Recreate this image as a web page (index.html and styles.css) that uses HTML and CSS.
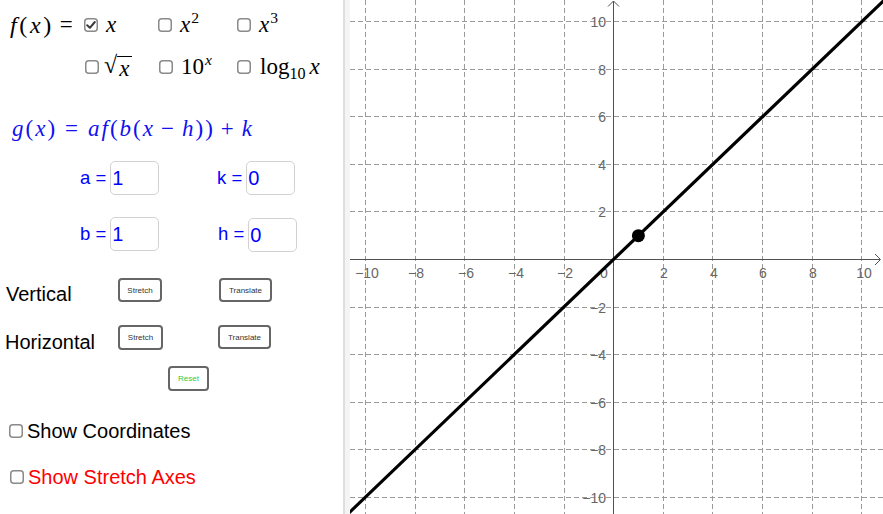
FILE: index.html
```html
<!DOCTYPE html>
<html>
<head>
<meta charset="utf-8">
<link rel="stylesheet" href="styles.css">
</head>
<body>
<div class="app">
  <div class="panel">
    <div class="frow r1">
      <div class="flab m"><span class="fx"><i>f</i>(<i>x</i>)</span><span class="eq">=</span></div>
      <div class="opt c1">
        <svg class="cb" viewBox="0 0 14 14"><rect x="0.75" y="0.75" width="12.5" height="12.5" rx="3"/><path class="tick" d="M3.2 7.2 L5.9 9.8 L10.8 4"/></svg>
        <span class="m"><i>x</i></span>
      </div>
      <div class="opt c2">
        <svg class="cb" viewBox="0 0 14 14"><rect x="0.75" y="0.75" width="12.5" height="12.5" rx="3"/></svg>
        <span class="m"><i>x</i><sup>2</sup></span>
      </div>
      <div class="opt">
        <svg class="cb" viewBox="0 0 14 14"><rect x="0.75" y="0.75" width="12.5" height="12.5" rx="3"/></svg>
        <span class="m"><i>x</i><sup>3</sup></span>
      </div>
    </div>
    <div class="frow r2">
      <div class="opt c1 g5">
        <svg class="cb" viewBox="0 0 14 14"><rect x="0.75" y="0.75" width="12.5" height="12.5" rx="3"/></svg>
        <span class="m sqrt"><span class="rad">√</span><span class="radx"><i>x</i></span></span>
      </div>
      <div class="opt c2">
        <svg class="cb" viewBox="0 0 14 14"><rect x="0.75" y="0.75" width="12.5" height="12.5" rx="3"/></svg>
        <span class="m">10<sup><i>x</i></sup></span>
      </div>
      <div class="opt g9">
        <svg class="cb" viewBox="0 0 14 14"><rect x="0.75" y="0.75" width="12.5" height="12.5" rx="3"/></svg>
        <span class="m">log<sub>10</sub><span class="sp"></span><i>x</i></span>
      </div>
    </div>
    <div class="grow m"><i>g</i>(<i>x</i>)<span class="rel">=</span><i>a</i><i>f</i>(<i>b</i>(<i>x</i><span class="bin">−</span><i>h</i>))<span class="bin">+</span><i>k</i></div>
    <div class="irow ra">
      <div class="icell w137"><span class="ilab">a =</span><div class="ibox">1</div></div>
      <div class="icell"><span class="ilab">k =</span><div class="ibox">0</div></div>
    </div>
    <div class="irow rb">
      <div class="icell w138"><span class="ilab">b =</span><div class="ibox">1</div></div>
      <div class="icell"><span class="ilab">h =</span><div class="ibox low">0</div></div>
    </div>
    <div class="brow bv">
      <div class="blab">Vertical</div>
      <div class="btn b44">Stretch</div>
      <div class="btn b53">Translate</div>
    </div>
    <div class="brow bh">
      <div class="blab">Horizontal</div>
      <div class="btn b45">Stretch</div>
      <div class="btn b53 t0">Translate</div>
    </div>
    <div class="rrow"><div class="btn reset">Reset</div></div>
    <div class="crow c-first">
      <svg class="cb2" viewBox="0 0 14 14"><rect x="0.75" y="0.75" width="12.5" height="12.5" rx="3"/></svg>
      <span class="ctext">Show Coordinates</span>
    </div>
    <div class="crow c-second">
      <svg class="cb2" viewBox="0 0 14 14"><rect x="0.75" y="0.75" width="12.5" height="12.5" rx="3"/></svg>
      <span class="ctext red">Show Stretch Axes</span>
    </div>
  </div>
  <div class="divider"></div>
  <div class="graph">
    <svg width="533" height="514" viewBox="0 0 533 514">
      <g class="grid">
        <line x1="15.5" y1="0" x2="15.5" y2="514"/>
        <line x1="65.5" y1="0" x2="65.5" y2="514"/>
        <line x1="114.5" y1="0" x2="114.5" y2="514"/>
        <line x1="164.5" y1="0" x2="164.5" y2="514"/>
        <line x1="214.5" y1="0" x2="214.5" y2="514"/>
        <line x1="313.5" y1="0" x2="313.5" y2="514"/>
        <line x1="362.5" y1="0" x2="362.5" y2="514"/>
        <line x1="412.5" y1="0" x2="412.5" y2="514"/>
        <line x1="462.5" y1="0" x2="462.5" y2="514"/>
        <line x1="511.5" y1="0" x2="511.5" y2="514"/>
        <line x1="0" y1="21.5" x2="533" y2="21.5"/>
        <line x1="0" y1="69.5" x2="533" y2="69.5"/>
        <line x1="0" y1="116.5" x2="533" y2="116.5"/>
        <line x1="0" y1="164.5" x2="533" y2="164.5"/>
        <line x1="0" y1="211.5" x2="533" y2="211.5"/>
        <line x1="0" y1="307.5" x2="533" y2="307.5"/>
        <line x1="0" y1="354.5" x2="533" y2="354.5"/>
        <line x1="0" y1="402.5" x2="533" y2="402.5"/>
        <line x1="0" y1="449.5" x2="533" y2="449.5"/>
        <line x1="0" y1="497.5" x2="533" y2="497.5"/>
      </g>
      <g class="axes">
        <line x1="0" y1="259.5" x2="530" y2="259.5"/>
        <polyline points="525,254 530.5,259.5 525,265"/>
        <line x1="263.5" y1="514" x2="263.5" y2="1"/>
        <polyline points="258,6.5 263.5,1 269,6.5"/>
      </g>
      <g class="lbl xl">
        <text x="17" y="278">−10</text>
        <text x="66" y="278">−8</text>
        <text x="116" y="278">−6</text>
        <text x="166" y="278">−4</text>
        <text x="215" y="278">−2</text>
        <text x="254" y="278">0</text>
        <text x="314" y="278">2</text>
        <text x="364" y="278">4</text>
        <text x="413" y="278">6</text>
        <text x="463" y="278">8</text>
        <text x="514" y="278">10</text>
      </g>
      <g class="lbl yl">
        <text x="256" y="26.5">10</text>
        <text x="256" y="74.5">8</text>
        <text x="256" y="121.5">6</text>
        <text x="256" y="169.5">4</text>
        <text x="256" y="216.5">2</text>
        <text x="256" y="312.5">−2</text>
        <text x="256" y="359.5">−4</text>
        <text x="256" y="407.5">−6</text>
        <text x="256" y="454.5">−8</text>
        <text x="256" y="502.5">−10</text>
      </g>
      <line class="fline" x1="-9.85" y1="521.3" x2="541.8" y2="-7.1"/>
      <circle class="pt" cx="288.4" cy="235.7" r="6.5"/>
    </svg>
  </div>
</div>
</body>
</html>
```

FILE: styles.css
```css
html, body {
  margin: 0;
  padding: 0;
  background: #ffffff;
}
body {
  width: 883px;
  height: 514px;
  overflow: hidden;
  font-family: "Liberation Sans", Arial, sans-serif;
  color: #000;
}
.app {
  display: flex;
  width: 883px;
  height: 514px;
}
.panel {
  width: 343px;
  flex: none;
  display: flex;
  flex-direction: column;
}
.divider {
  width: 7px;
  flex: none;
  background: #f4f4f4;
  border-left: 2px solid #dedede;
  box-sizing: border-box;
}
.graph {
  flex: 1;
}
.graph svg {
  display: block;
}

/* math */
.m {
  font-family: "Liberation Serif", "Times New Roman", serif;
  font-size: 23px;
  line-height: 1;
  white-space: nowrap;
}
.m i {
  font-style: italic;
}
.m sup {
  font-size: 0.68em;
  vertical-align: 0.55em;
  line-height: 0;
  margin-left: 1px;
}
.m sub {
  font-size: 0.7em;
  vertical-align: -0.3em;
  line-height: 0;
}
.sp {
  display: inline-block;
  width: 4px;
}

.frow {
  display: flex;
  align-items: center;
}
.r1 {
  height: 49px;
  padding-left: 10px;
}
.r2 {
  height: 35px;
  padding-left: 85px;
}
.flab {
  width: 74px;
  display: flex;
  align-items: center;
  font-size: 24px;
}
.fx {
  letter-spacing: 2.6px;
}
.eq {
  margin-left: 6px;
  font-size: 23px;
}
.opt {
  display: flex;
  align-items: center;
  gap: 8px;
}
.opt.g5 {
  gap: 5px;
}
.opt.g9 {
  gap: 9px;
}
.c1 {
  width: 74px;
}
.r2 .c2 {
  width: 78px;
}
.r1 .c2 {
  width: 79px;
}
.cb {
  width: 14px;
  height: 14px;
  flex: none;
}
.cb rect, .cb2 rect {
  fill: #fff;
  stroke: #8a8a8a;
  stroke-width: 1.5;
}
.cb .tick {
  fill: none;
  stroke: #3a3a3a;
  stroke-width: 2;
  stroke-linecap: round;
  stroke-linejoin: round;
}
.sqrt {
  display: inline-flex;
  align-items: flex-start;
}
.rad {
  font-size: 24px;
  line-height: 1;
}
.radx {
  border-top: 1px solid #000;
  margin-top: 3px;
  padding: 0 3px 0 2px;
  line-height: 1;
}

/* g(x) */
.grow {
  margin-top: 24px;
  height: 40px;
  padding-left: 12px;
  display: flex;
  align-items: center;
  color: #1010f0;
  letter-spacing: 2px;
}
.rel {
  margin: 0 8px;
}
.bin {
  margin: 0 6px;
}

/* inputs */
.irow {
  display: flex;
  align-items: center;
  height: 34px;
  padding-left: 80px;
}
.ra {
  margin-top: 13px;
}
.rb {
  margin-top: 22px;
}
.icell {
  display: flex;
  align-items: center;
}
.w137 {
  width: 137px;
}
.w138 {
  width: 138px;
}
.ilab {
  font-size: 18.5px;
  color: #0000ff;
  margin-right: 4px;
  white-space: nowrap;
}
.ibox {
  width: 49px;
  height: 34px;
  box-sizing: border-box;
  border: 1px solid #d2d2d2;
  border-radius: 5px;
  font-size: 20px;
  color: #0000ff;
  padding-left: 1px;
  display: flex;
  align-items: center;
}
.ibox.low {
  margin-top: 2px;
}

/* buttons */
.brow {
  display: flex;
  align-items: flex-start;
  height: 25px;
}
.bv {
  margin-top: 27px;
  padding-left: 6px;
}
.bh {
  margin-top: 22px;
  padding-left: 5px;
}
.blab {
  font-size: 20px;
  line-height: 20px;
  padding-top: 6px;
  width: 112px;
}
.bh .blab {
  padding-top: 7px;
  width: 113px;
}
.btn {
  box-sizing: border-box;
  height: 24px;
  border: 2px solid #666;
  border-radius: 4px;
  font-size: 8px;
  color: #333;
  display: flex;
  align-items: center;
  justify-content: center;
  flex: none;
}
.b44 {
  width: 44px;
  margin-right: 57px;
}
.b45 {
  width: 45px;
  height: 25px;
  margin-right: 55px;
}
.b53 {
  width: 53px;
}
.rrow {
  margin-top: 16px;
  padding-left: 168px;
  display: flex;
}
.reset {
  width: 41px;
  height: 25px;
  color: #2ecc40;
}

/* check rows */
.crow {
  display: flex;
  align-items: center;
  height: 20px;
  gap: 4px;
}
.c-first {
  margin-top: 30px;
  padding-left: 9px;
}
.c-second {
  margin-top: 26px;
  padding-left: 10px;
}
.cb2 {
  width: 14px;
  height: 14px;
  flex: none;
}
.ctext {
  font-size: 20px;
  line-height: 20px;
}
.red {
  color: #ff0000;
}

/* graph */
.grid line {
  stroke: #9a9a9a;
  stroke-width: 1;
  stroke-dasharray: 5 3;
}
.axes line, .axes polyline {
  stroke: #505050;
  stroke-width: 1;
  fill: none;
}
.lbl text {
  font-family: "Liberation Sans", Arial, sans-serif;
  font-size: 14px;
  fill: #666;
}
.xl text {
  text-anchor: middle;
}
.yl text {
  text-anchor: end;
}
.fline {
  stroke: #000;
  stroke-width: 3.2;
}
.pt {
  fill: #000;
}
```
